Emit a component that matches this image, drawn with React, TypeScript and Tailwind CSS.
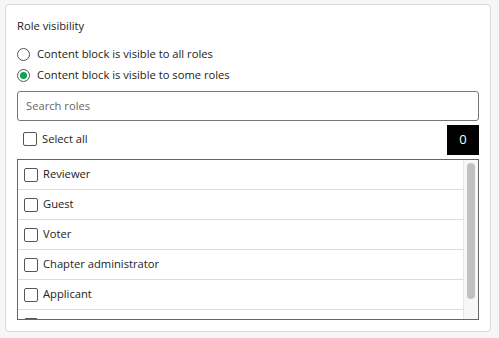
import * as React from "react";

const roles = [
  "Reviewer",
  "Guest",
  "Voter",
  "Chapter administrator",
  "Applicant",
  "Member",
];

function Radio({ checked }: { checked?: boolean }) {
  return (
    <span className="flex h-[13px] w-[13px] shrink-0 items-center justify-center rounded-full border border-[#555] bg-white">
      {checked && <span className="h-[7px] w-[7px] rounded-full bg-[#0aa34f]" />}
    </span>
  );
}

function Checkbox() {
  return (
    <span className="h-[14px] w-[14px] shrink-0 rounded-[2px] border border-[#555] bg-white" />
  );
}

export default function App() {
  return (
    <div
      className="h-[338px] w-[499px] bg-[#f6f6f6] pt-[4px] pl-[5px] text-[11.2px] text-[#222]"
      style={{ fontFamily: '"Open Sans", "Noto Sans", sans-serif' }}
    >
      <div className="h-[328px] w-[486px] rounded-[4px] border border-[#dcdcdc] bg-white px-[11px] pt-[12px]">
        <div className="h-[18px] leading-[18px]">Role visibility</div>

        {/* 可視性の選択 */}
        <div className="mt-[12px] flex flex-col gap-[6px]">
          <label className="flex h-[15px] items-center gap-[7px]">
            <Radio />
            <span>Content block is visible to all roles</span>
          </label>
          <label className="flex h-[15px] items-center gap-[7px]">
            <Radio checked />
            <span>Content block is visible to some roles</span>
          </label>
        </div>

        <div className="mt-[8px] flex h-[30px] items-center rounded-[3px] border border-[#777] px-[8px] text-[#666]">
          Search roles
        </div>

        <div className="mt-[3px] flex h-[31px] items-center justify-between">
          <label className="flex items-center gap-[5px] pl-[6px]">
            <Checkbox />
            <span>Select all</span>
          </label>
          <span className="flex h-[30px] w-[32px] items-center justify-center bg-black text-[13px] text-white">
            0
          </span>
        </div>

        <div className="mt-[4px] flex h-[161px] overflow-hidden border border-[#666]">
          <div className="flex-1 overflow-hidden">
            {roles.map((role) => (
              <div
                key={role}
                className="flex h-[30px] items-center gap-[5px] border-b border-[#dcdcdc] pl-[6px]"
              >
                <Checkbox />
                <span>{role}</span>
              </div>
            ))}
          </div>
          {/* スクロールバー */}
          <div className="w-[15px] shrink-0 border-l border-[#e6e6e6] bg-[#f7f7f7] px-[3px] pt-[3px]">
            <div className="h-[136px] rounded-full bg-[#c1c1c1]" />
          </div>
        </div>
      </div>
    </div>
  );
}
